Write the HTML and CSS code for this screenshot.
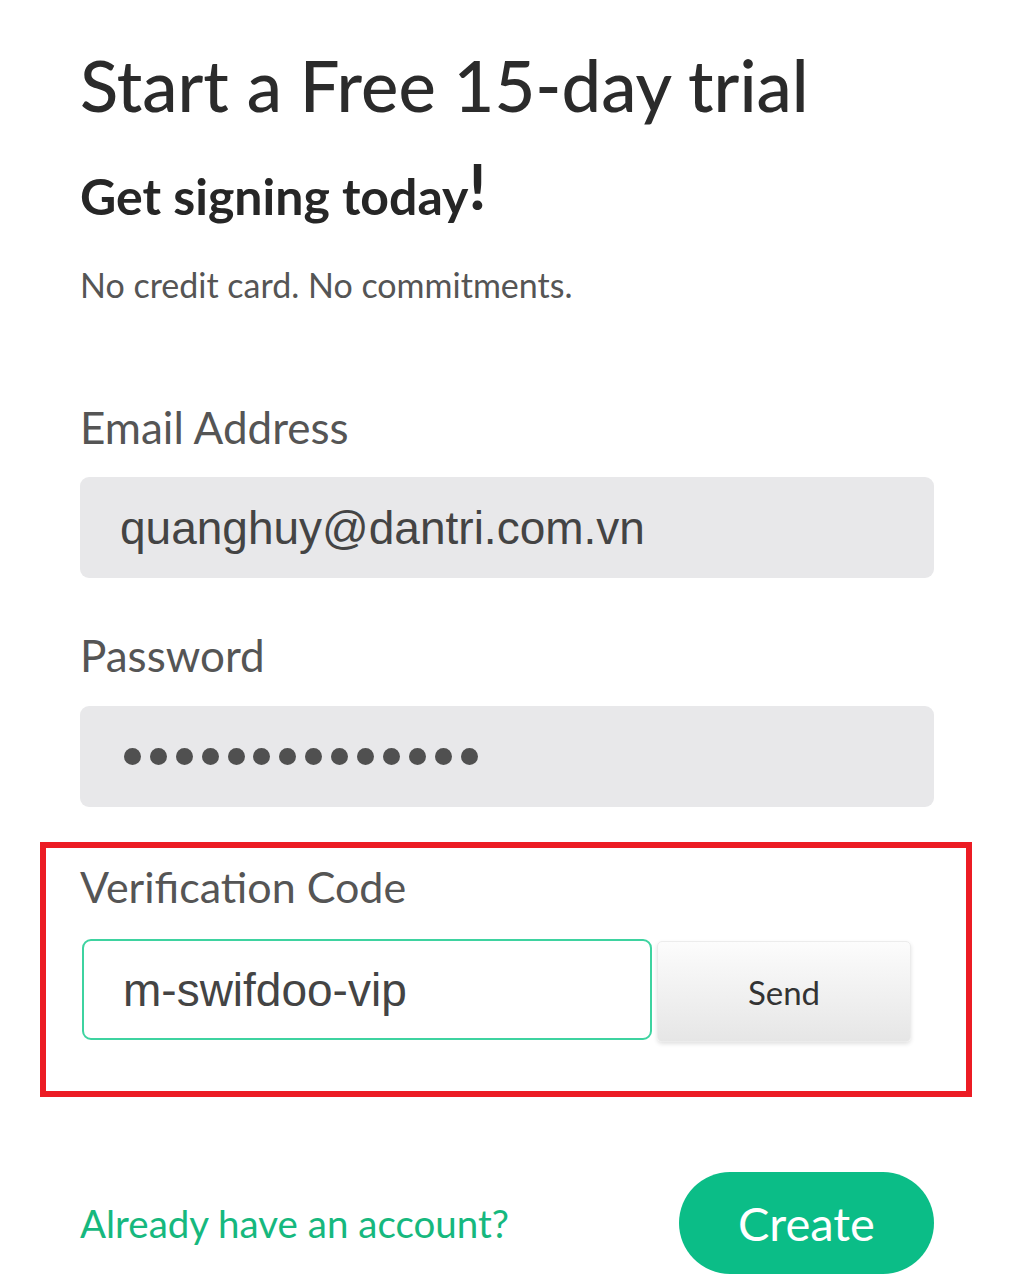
FILE: index.html
```html
<!DOCTYPE html>
<html>
<head>
  <meta charset="UTF-8">
  <title>Start a Free 15-day trial</title>
  <link rel="stylesheet" href="styles.css">
</head>
<body>

  <div class="signup">
    <h1 class="title">Start a Free 15-day trial</h1>
    <h2 class="subtitle">Get signing today<span class="bang">!</span></h2>
    <p class="note">No credit card. No commitments.</p>

    <form class="form" autocomplete="off">
      <label class="label" for="email">Email Address</label>
      <input class="field" id="email" type="text" value="quanghuy@dantri.com.vn" readonly>

      <label class="label label-pass">Password</label>
      <div class="field dots">
        <span></span><span></span><span></span><span></span><span></span><span></span><span></span>
        <span></span><span></span><span></span><span></span><span></span><span></span><span></span>
      </div>

      <!-- highlighted block -->
      <div class="highlight">
        <label class="label" for="code">Verification Code</label>
        <div class="code-row">
          <input class="code" id="code" type="text" value="m-swifdoo-vip" readonly>
          <button type="button" class="send">Send</button>
        </div>
      </div>

      <div class="actions">
        <a class="login" href="#">Already have an account?</a>
        <button type="submit" class="create">Create</button>
      </div>
    </form>
  </div>

</body>
</html>
```

FILE: styles.css
```css
/*
 *  page
 */
body {
  margin: 0;
  background: #fff;
  font-family: Lato, "Open Sans", sans-serif;
}

.signup {
  width: 854px;
  padding: 40px 0 0 80px;
}

/* headings */
.title {
  margin: 0;
  font-size: 70.5px;
  line-height: 90px;
  font-weight: 500;
  color: #2b2b2b;
}

.subtitle {
  margin: 21px 0 0 0;
  font-size: 50px;
  line-height: 70px;
  font-weight: 700;
  color: #262626;
}

.subtitle .bang {
  font-size: 64px;
  vertical-align: 5px;
}

.note {
  margin: 34px 0 0 0;
  font-size: 34px;
  line-height: 40px;
  color: #555;
}

/*
 *  form
 */
.form {
  display: flex;
  flex-direction: column;
  margin-top: 97px;
}

.label {
  display: block;
  font-size: 44px;
  line-height: 50px;
  color: #555;
}

.label-pass {
  margin-top: 52px;
}

.field {
  box-sizing: border-box;
  width: 854px;
  height: 101px;
  margin-top: 25px;
  padding: 0 40px;
  border: none;
  border-radius: 9px;
  background: #e8e8ea;
  font-family: "Liberation Sans", Arial, sans-serif;
  font-size: 46px;
  color: #444;
  outline: none;
}

/* password bullets */
.dots {
  display: flex;
  align-items: center;
  gap: 8.9px;
  padding-left: 44px;
  margin-top: 26px;
}

.dots span {
  width: 17px;
  height: 17px;
  border-radius: 50%;
  background: #505050;
}

/* red annotation box */
.highlight {
  margin: 35px 0 0 -40px;
  width: 932px;
  box-sizing: border-box;
  border: 6px solid #ec1c24;
  padding: 14px 0 49px 34px;
}

.highlight .label {
  font-size: 43px;
}

.code-row {
  display: flex;
  align-items: flex-start;
  margin-top: 27px;
}

.code {
  box-sizing: border-box;
  width: 570px;
  height: 101px;
  margin-left: 2px;
  padding: 0 0 0 39px;
  border: 2px solid #3ed3a0;
  border-radius: 9px;
  background: #fff;
  font-family: "Liberation Sans", Arial, sans-serif;
  font-size: 46px;
  color: #444;
  outline: none;
}

.send {
  width: 254px;
  height: 101px;
  margin: 2px 0 0 5px;
  border: 1px solid #ececec;
  border-radius: 5px;
  background: linear-gradient(#fcfcfc, #e6e6e6);
  box-shadow: 0 2px 4px rgba(0,0,0,0.12);
  font-family: Lato, "Open Sans", sans-serif;
  font-size: 33px;
  color: #333;
  cursor: pointer;
}

/* bottom row */
.actions {
  display: flex;
  justify-content: space-between;
  align-items: center;
  margin-top: 75px;
}

.login {
  font-size: 38.5px;
  color: #16b87e;
  text-decoration: none;
}

.create {
  width: 255px;
  height: 102px;
  border: none;
  border-radius: 51px;
  background: #0bbd87;
  font-family: Lato, "Open Sans", sans-serif;
  font-size: 47px;
  color: #fff;
  cursor: pointer;
}
```
